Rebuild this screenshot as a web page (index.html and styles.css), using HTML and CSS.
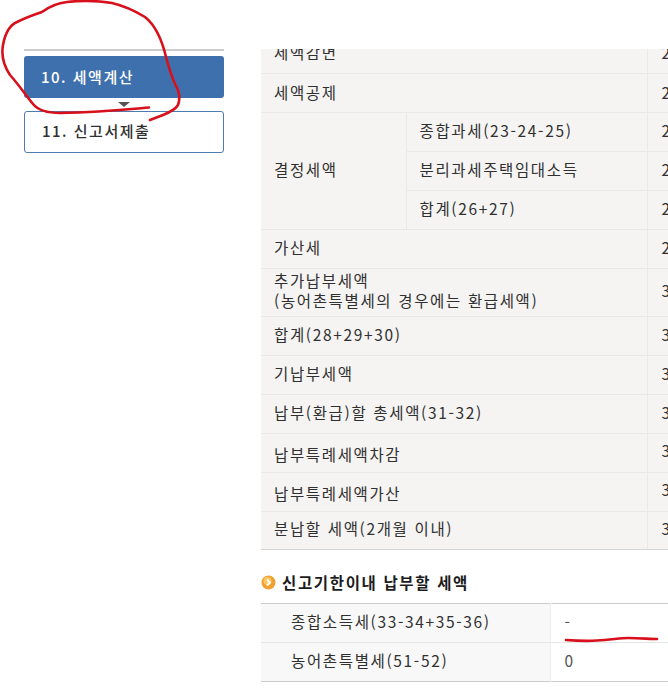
FILE: index.html
```html
<!DOCTYPE html>
<html lang="ko">
<head>
<meta charset="utf-8">
<title>세액계산</title>
<link rel="stylesheet" href="styles.css">
</head>
<body>
<div class="page">
  <aside class="side">
    <div class="side-rule"></div>
    <div class="step step-on">10. 세액계산</div>
    <div class="step-arrow"></div>
    <div class="step step-next">11. 신고서제출</div>
  </aside>
  <main class="content">
    <div class="clip">
      <table class="calc">
        <colgroup><col class="c1"><col class="c2"><col class="c3"></colgroup>
        <tbody>
          <tr class="top"><th colspan="2">세액감면</th><td>2</td></tr>
          <tr class="top"><th colspan="2">세액공제</th><td>2</td></tr>
          <tr><th rowspan="3">결정세액</th><th class="sub">종합과세(23-24-25)</th><td>2</td></tr>
          <tr><th class="sub">분리과세주택임대소득</th><td>2</td></tr>
          <tr><th class="sub">합계(26+27)</th><td>2</td></tr>
          <tr><th colspan="2">가산세</th><td>2</td></tr>
          <tr class="tall"><th colspan="2">추가납부세액<br>(농어촌특별세의 경우에는 환급세액)</th><td>3</td></tr>
          <tr><th colspan="2">합계(28+29+30)</th><td>3</td></tr>
          <tr><th colspan="2">기납부세액</th><td>3</td></tr>
          <tr><th colspan="2">납부(환급)할 총세액(31-32)</th><td>3</td></tr>
          <tr class="low"><th colspan="2">납부특례세액차감</th><td>3</td></tr>
          <tr class="low"><th colspan="2">납부특례세액가산</th><td>3</td></tr>
          <tr class="last"><th colspan="2">분납할 세액(2개월 이내)</th><td>3</td></tr>
        </tbody>
      </table>
    </div>
    <h2 class="heading">
      <svg class="bullet" width="15" height="15" viewBox="0 0 15 15" aria-hidden="true">
        <circle cx="7.5" cy="7.5" r="7" fill="#f0a030"/>
        <circle cx="6.5" cy="6" r="4" fill="#f9c860"/>
        <path d="M6 4.5 9 7.5 6 10.5" fill="none" stroke="#fff" stroke-width="1.8"/>
      </svg>
      <span class="heading-text">신고기한이내 납부할 세액</span>
    </h2>
    <table class="pay">
      <colgroup><col class="p1"><col></colgroup>
      <tbody>
        <tr><th>종합소득세(33-34+35-36)</th><td>-</td></tr>
        <tr><th>농어촌특별세(51-52)</th><td>0</td></tr>
      </tbody>
    </table>
  </main>
</div>
<svg class="ink" width="668" height="696" viewBox="0 0 668 696" aria-hidden="true">
  <path d="M149 107.500C120 110 100 112 60 113C48 113 38 110 33 104C26 96 20 86 10 75C4 66 1 56 3 45C5 34 10 25 17 22C25 18 33 15 42 12C50 6 58 3 67 2C85 0 100 1 112 3C125 6 135 11 145 17C155 25 162 40 166 57C169 68 172 78 176 86C180 92 180 100 178 105C175 110 168 113 163 115L150 120" fill="none" stroke="#d8101c" stroke-width="2.600" stroke-linecap="round" stroke-linejoin="round"/>
  <path d="M566 640C580 641 590 641 597 640.500C610 640 620 638 628 638C640 638 650 639 657 639" fill="none" stroke="#d8101c" stroke-width="2.600" stroke-linecap="round"/>
</svg>
</body>
</html>
```

FILE: styles.css
```css
html, body {
  margin: 0;
  padding: 0;
  background: #fff;
}
body {
  width: 668px;
  height: 696px;
  overflow: hidden;
  position: relative;
  font-family: "Noto Sans CJK KR", "Liberation Sans", sans-serif;
  font-size: 15.500px;
  letter-spacing: 1.650px;
  color: #303030;
}
.page {
  display: flex;
  align-items: flex-start;
  padding-left: 24px;
}
.side {
  width: 200px;
  margin-right: 37px;
  padding-top: 49px;
  flex: none;
}
.side-rule {
  height: 2px;
  background: #ccc;
  margin-bottom: 5px;
}
.step {
  box-sizing: border-box;
  border-radius: 3px;
  padding-left: 17px;
  font-size: 15px;
  letter-spacing: 1.500px;
  font-weight: 500;
}
.step-on {
  height: 42px;
  line-height: 42px;
  background: #3f70ae;
  color: #fff;
}
.step-arrow {
  width: 0;
  height: 0;
  margin: 4px auto;
  border-left: 6px solid transparent;
  border-right: 6px solid transparent;
  border-top: 5px solid #555;
}
.step-next {
  height: 42px;
  line-height: 38px;
  border: 1px solid #4f7cb0;
  color: #303030;
  background: #fff;
}
.content {
  width: 407px;
  flex: none;
}
.clip {
  margin-top: 49px;
  overflow: hidden;
}
.calc {
  width: 440px;
  margin-top: -15px;
  border-collapse: collapse;
  table-layout: fixed;
  background: #f5f4f3;
}
.c1 { width: 145px; }
.c2 { width: 241px; }
.calc th, .calc td {
  height: 39px;
  padding: 0 0 4px 13px;
  box-sizing: border-box;
  border-bottom: 1px solid #eae9e8;
  font-weight: 400;
  text-align: left;
  line-height: 20px;
}
.calc td {
  border-left: 1px solid #eae9e8;
  padding-left: 14px;
}
.calc .sub {
  border-left: 1px solid #eae9e8;
}
.calc .top th, .calc .top td { padding-bottom: 2px; }
.calc .tall th, .calc .tall td { height: 48px; }
.calc .low th { padding-top: 5px; padding-bottom: 2px; }
.calc .low td { padding-bottom: 5px; }
.calc .last th, .calc .last td {
  height: 38px;
  border-bottom: 1px solid #d5d5d5;
}
.heading {
  display: flex;
  align-items: flex-start;
  gap: 6px;
  margin: 23px 0 0;
  height: 20px;
  font-size: 15.500px;
  font-weight: 700;
  color: #1c1c1c;
}
.bullet {
  flex: none;
  margin-top: 2px;
}
.heading-text {
  line-height: 18px;
}
.pay {
  width: 100%;
  margin-top: 10px;
  border-collapse: collapse;
  table-layout: fixed;
  border-top: 1px solid #ccc;
  border-bottom: 1px solid #ccc;
}
.p1 { width: 289px; }
.pay th, .pay td {
  height: 39px;
  padding: 0 0 4px;
  box-sizing: border-box;
  font-weight: 400;
  text-align: left;
  border-bottom: 1px solid #e6e6e6;
}
.pay tr:last-child th, .pay tr:last-child td {
  border-bottom: 0;
}
.pay th {
  background: #f8f8f8;
  padding-left: 30px;
  border-right: 1px solid #eee;
}
.pay td {
  padding-left: 14px;
  color: #555;
}
.ink {
  position: absolute;
  left: 0;
  top: 0;
  pointer-events: none;
}
```
